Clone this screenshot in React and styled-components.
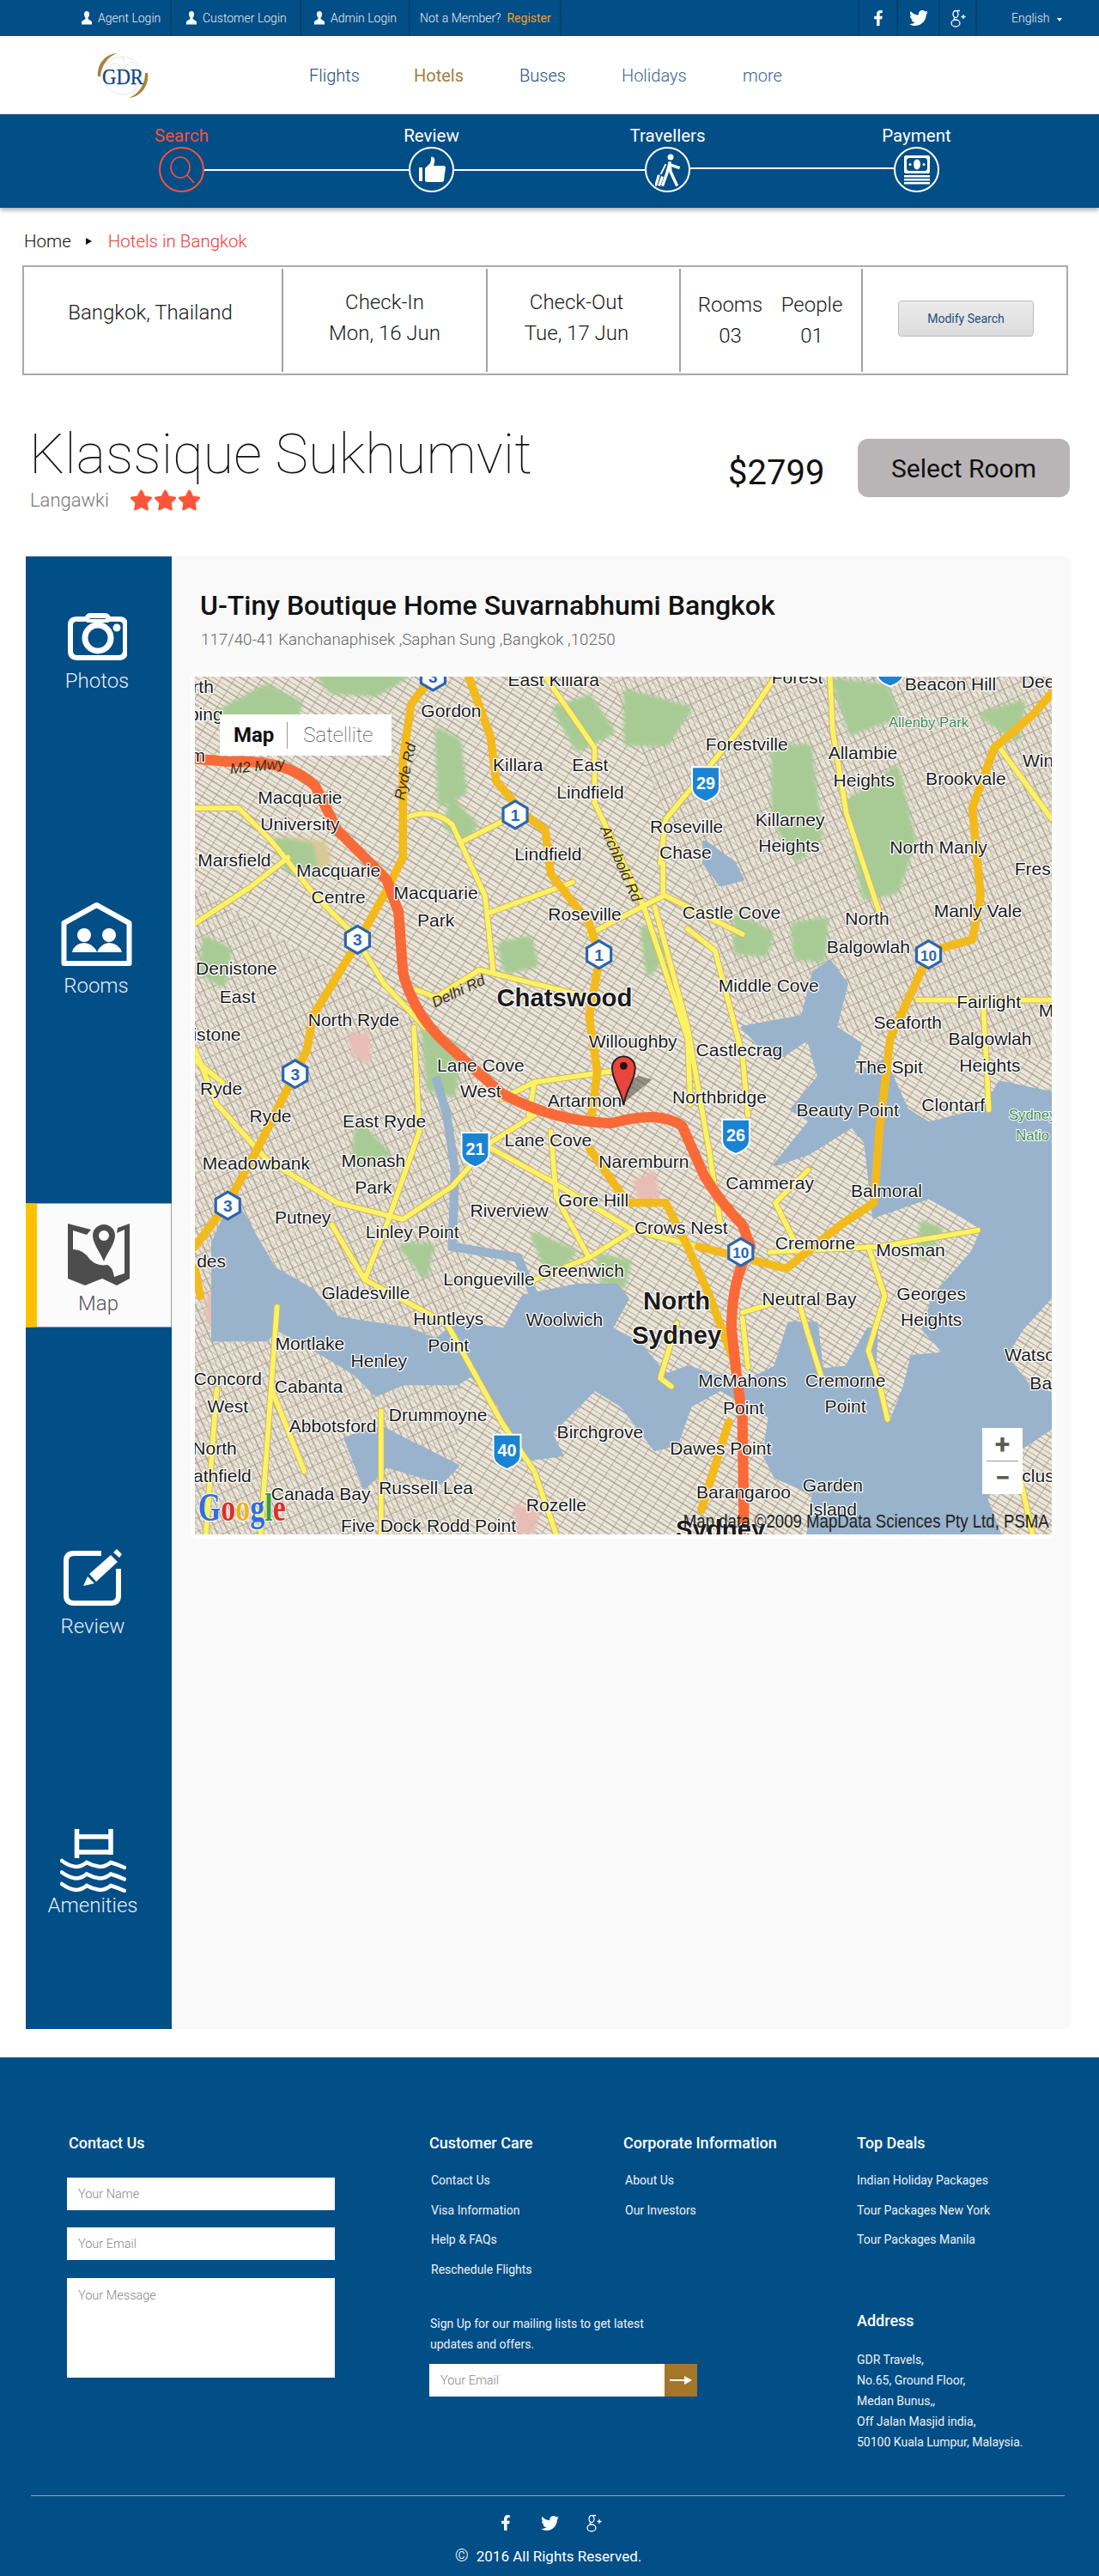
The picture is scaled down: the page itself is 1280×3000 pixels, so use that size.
import React from "react";
import styled, { createGlobalStyle } from "styled-components";
import { FaFacebookF, FaTwitter, FaStar } from "react-icons/fa";

const NAVY = "#024e87";

const GlobalStyle = createGlobalStyle`
  * { box-sizing: border-box; }
  body {
    margin: 0;
    background: #fff;
    font-family: Roboto, "Liberation Sans", sans-serif;
    font-weight: 300;
    color: #111;
  }
`;

/* ---------- map data, all in a 1565 x 1565 drawing space ---------- */
const water = [
  "1160,520 1190,560 1170,640 1215,670 1200,730 1260,700 1300,790 1340,815 1440,790 1470,740 1565,760 1565,1130 1510,1190 1480,1240 1520,1290 1565,1310 1565,1370 1490,1420 1445,1500 1470,1565 1120,1565 1130,1490 1060,1460 1040,1420 1050,1350 960,1300 905,1330 880,1400 840,1410 780,1330 730,1300 650,1380 670,1420 590,1430 555,1330 500,1270 560,1200 600,1130 700,1110 770,1110 790,1135 760,1190 810,1215 860,1275 900,1260 1000,1290 1060,1260 1085,1180 1135,1180 1145,1265 1190,1260 1230,1190 1245,1190 1240,1290 1270,1362 1295,1300 1310,1240 1370,1235 1330,1190 1350,1130 1420,1050 1440,1005 1340,950 1240,985 1225,850 1200,820 1120,870 1060,890 1125,810 1090,790 1140,730 1120,660 1060,700 1000,640 1110,620 1130,540",
  "30,1040 70,950 110,1020 145,1080 215,1120 260,1170 390,1190 440,1210 480,1180 560,1190 510,1270 480,1290 380,1290 330,1310 290,1270 240,1240 150,1190 130,1210 30,1210",
  "275,1390 340,1370 400,1400 480,1440 450,1470 350,1440 310,1480",
  "930,300 985,340 1000,370 960,380 930,340",
];
const parks = [
  "40,70 130,20 190,50 170,110 90,130",
  "230,0 380,0 330,30 250,25",
  "445,100 480,120 490,210 450,230",
  "470,230 510,270 490,300 460,270",
  "660,60 720,40 760,100 700,130",
  "790,30 900,60 860,120 790,120",
  "1060,130 1120,130 1140,290 1100,330 1060,260",
  "1195,230 1280,170 1310,300 1280,390 1225,400",
  "1170,10 1260,20 1280,70 1200,100",
  "1440,70 1510,50 1500,110",
  "990,440 1050,470 1040,505 990,500",
  "1095,455 1150,445 1145,515 1100,510",
  "820,460 860,500 830,540",
  "560,490 610,480 620,525 570,535",
  "1460,790 1565,760 1565,860 1500,860",
  "420,650 480,680 470,760 430,750",
  "150,300 210,310 220,360 170,350",
  "20,480 60,500 50,560 15,540",
  "740,1060 790,1070 780,1110 745,1100",
  "620,1020 690,1050 650,1090",
  "1420,1240 1470,1230 1450,1330 1400,1330",
  "1330,1000 1360,1010 1330,1060",
  "300,820 350,870 290,890",
  "380,1040 430,1040 420,1090",
];
const tan = ["160,290 240,300 250,340 200,370 170,330"];
const pink = [
  "20,1130 70,1100 90,1140 50,1190 20,1180",
  "280,650 320,650 320,710 285,690",
  "800,920 840,900 850,950 810,960",
  "580,1510 630,1520 620,1565 590,1565",
];
const yellowRoads = [
  "M0 240 L80 240 L140 300 L220 400 L290 470 L345 560 L420 640",
  "M0 450 L100 385 L170 330",
  "M400 570 L440 585 L520 535 L620 560 L720 585",
  "M380 260 Q430 235 470 270 L530 400 L545 540",
  "M540 430 L690 375",
  "M490 300 L570 260",
  "M730 230 L820 420 L900 660 L905 780",
  "M855 340 L855 400 L720 470",
  "M860 400 L1000 470",
  "M640 0 L730 130 L730 230",
  "M1160 0 L1165 100 L1190 250 L1250 430",
  "M840 420 L900 640 L940 870 L960 1000",
  "M900 460 L950 500 L1000 690 L1010 800",
  "M1060 0 L1000 90 L860 260 L850 340",
  "M0 680 L40 780 L130 880 L260 960 L380 990 L470 930 L540 850 L620 800",
  "M400 640 L410 830 L350 1000 L310 1100 L460 1180 L560 1360 L620 1450 L660 1565",
  "M540 860 L650 920 L800 1010",
  "M620 740 L610 800",
  "M650 830 L660 950 L720 1060",
  "M1050 1050 L1250 1040 L1430 1010",
  "M1230 1040 L1260 1130 L1230 1230 L1250 1290 L1265 1355",
  "M1000 1160 L1100 1130 L1120 1200 L1145 1280",
  "M880 1180 L850 1280 L870 1295",
  "M1000 1170 L1010 1260",
  "M1500 1430 L1530 1565",
  "M1320 590 L1565 590",
  "M1440 600 L1450 790",
  "M1470 130 L1565 260",
  "M150 1150 L120 1565",
  "M340 1340 L340 1565",
  "M250 1000 L310 1100",
  "M140 1300 L200 1450",
  "M40 1300 L20 1565",
  "M620 1100 L720 1060 L800 1010 L920 1040",
  "M1120 900 L1060 960 L1100 1040",
  "M0 700 L50 740",
  "M760 720 L620 740 L560 770",
];
const orangeRoads = [
  "M430 5 L395 50 L380 150 L380 330 L350 390 L300 480 L215 620 L205 680 L170 750 L110 870 L60 960 L0 1040",
  "M500 0 L540 110 L550 190 L600 250 L640 280 L650 360 L720 450 L740 510 L720 620 L735 720 L725 800",
  "M720 860 L790 960 L860 960 L900 1040 L940 1130 L985 1250",
  "M920 1040 L1080 1080 L1180 1000 L1240 960 L1250 830 L1270 660 L1330 530 L1345 500 L1420 480 L1435 400 L1420 240 L1460 130 L1530 70 L1565 30",
  "M975 1360 L925 1520",
  "M0 1080 L10 1130",
];
const routePath =
  "M0 150 L60 155 Q170 150 220 200 L260 280 L350 370 L372 430 L380 540 Q400 620 470 680 L560 760 Q650 810 760 815 Q850 790 890 820 L930 910 Q960 960 1000 1000 L1015 1040 Q980 1100 980 1190 L990 1280 L1000 1350 L1003 1565";
const shields = [
  ["3", 297, 480], ["3", 183, 725], ["3", 60, 965], ["3", 435, 0],
  ["1", 585, 252], ["1", 738, 507], ["10", 1340, 507], ["10", 997, 1050],
];
const badges = [
  ["29", 933, 195], ["21", 512, 862], ["26", 988, 838], ["40", 570, 1413], ["", 1270, -15],
];
const places = [
  ["rth", 15, 30], ["ping", 20, 80], ["m", 5, 155], ["Gordon", 468, 73], ["East Killara", 655, 18],
  ["Forest", 1100, 12], ["Beacon Hill", 1380, 25], ["Dee", 1540, 20], ["Forestville", 1008, 135],
  ["Allambie", 1220, 150], ["Heights", 1222, 200], ["Brookvale", 1408, 198], ["Win", 1540, 165],
  ["Killara", 590, 172], ["East", 722, 172], ["Lindfield", 722, 222], ["Macquarie", 192, 232],
  ["University", 192, 280], ["Lindfield", 645, 335], ["Marsfield", 72, 346], ["Macquarie", 262, 365],
  ["Centre", 262, 413], ["Macquarie", 440, 406], ["Park", 440, 456], ["Roseville", 898, 285],
  ["Chase", 896, 332], ["Killarney", 1087, 273], ["Heights", 1085, 320], ["North Manly", 1358, 322],
  ["Fres", 1530, 362], ["Roseville", 712, 445], ["Castle Cove", 980, 442], ["North", 1228, 452],
  ["Balgowlah", 1230, 504], ["Manly Vale", 1430, 438], ["Denistone", 76, 543], ["East", 78, 595],
  ["Middle Cove", 1048, 575], ["Fairlight", 1450, 605], ["M", 1555, 620], ["North Ryde", 290, 638],
  ["Seaforth", 1302, 642], ["istone", 40, 665], ["Willoughby", 800, 677], ["Castlecrag", 994, 693],
  ["Balgowlah", 1452, 672], ["Heights", 1452, 720], ["The Spit", 1268, 723], ["Lane Cove", 522, 720],
  ["West", 522, 768], ["Ryde", 48, 763], ["Artarmon", 712, 785], ["Northbridge", 958, 778],
  ["Beauty Point", 1192, 802], ["Clontarf", 1385, 793], ["Ryde", 138, 813], ["East Ryde", 346, 822],
  ["Lane Cove", 645, 857], ["Naremburn", 820, 896], ["Meadowbank", 112, 900], ["Monash", 326, 895],
  ["Park", 326, 943], ["Cammeray", 1050, 935], ["Balmoral", 1263, 950], ["Gore Hill", 728, 966],
  ["Riverview", 574, 986], ["Putney", 197, 998], ["Linley Point", 397, 1025], ["Crows Nest", 888, 1017],
  ["Cremorne", 1133, 1045], ["Mosman", 1307, 1057], ["des", 30, 1078], ["Greenwich", 705, 1095],
  ["Longueville", 537, 1110], ["Neutral Bay", 1122, 1147], ["Gladesville", 312, 1135], ["Georges", 1345, 1138],
  ["Heights", 1345, 1185], ["Huntleys", 463, 1182], ["Woolwich", 675, 1185], ["Mortlake", 210, 1228],
  ["Point", 463, 1232], ["Henley", 336, 1260], ["Watso", 1525, 1248], ["Concord", 60, 1292],
  ["McMahons", 1000, 1295], ["Cremorne", 1188, 1295], ["Ba", 1545, 1300], ["Cabanta", 208, 1307],
  ["West", 60, 1342], ["Point", 1002, 1345], ["Point", 1188, 1343], ["Drummoyne", 444, 1358],
  ["Abbotsford", 252, 1378], ["Birchgrove", 740, 1390], ["North", 36, 1420], ["Dawes Point", 960, 1420],
  ["clus", 1540, 1470], ["athfield", 50, 1470], ["Garden", 1165, 1487], ["Canada Bay", 230, 1503],
  ["Russell Lea", 422, 1492], ["Barangaroo", 1002, 1500], ["Rozelle", 660, 1522], ["Island", 1165, 1530],
  ["Five Dock", 340, 1560], ["Rodd Point", 505, 1560],
];
const bigPlaces = [
  ["Chatswood", 675, 602], ["North", 880, 1155], ["Sydney", 880, 1218], ["Sydney", 960, 1572],
];
const roadNames = [
  ["M2 Mwy", 115, 172, -6, 27], ["Ryde Rd", 393, 175, -78, 27],
  ["Delhi Rd", 485, 582, -25, 27], ["Archbold Rd", 770, 345, 66, 27],
];

const hexPoints = "0,-25 22,-12 22,12 0,25 -22,12 -22,-12";

const StreetMap = () => (
  <MapSvg viewBox="0 0 1565 1565" preserveAspectRatio="none">
    <defs>
      <pattern id="streetsA" width="21" height="17" patternUnits="userSpaceOnUse" patternTransform="rotate(32)">
        <rect width="21" height="17" fill="#ebe6da" />
        <path d="M0 0H21M0 8.500H21M0 0V17" stroke="#a89c8b" strokeWidth="2.200" />
      </pattern>
      <pattern id="streetsB" width="19" height="23" patternUnits="userSpaceOnUse" patternTransform="rotate(-24)">
        <path d="M0 0H19M0 0V23M9.500 0V23" stroke="#a89c8b" strokeWidth="2" />
      </pattern>
      <filter id="soft" x="0" y="0" width="1" height="1">
        <feGaussianBlur stdDeviation="1.200" />
      </filter>
      <filter id="softer" x="-0.100" y="-0.100" width="1.200" height="1.200">
        <feGaussianBlur stdDeviation="3" />
      </filter>
    </defs>
    <g filter="url(#soft)">
      <rect width="1565" height="1565" fill="url(#streetsA)" />
      <path d="M0 380 L520 700 L470 1565 L0 1565 Z M760 0 L1565 0 L1565 700 L1000 620 Z" fill="#ebe6da" opacity="0.55" />
      <path d="M0 380 L520 700 L470 1565 L0 1565 Z M760 0 L1565 0 L1565 700 L1000 620 Z" fill="url(#streetsB)" />
    </g>
    <g filter="url(#softer)">
      {tan.map((p, i) => <polygon key={i} points={p} fill="#d9c998" />)}
      {pink.map((p, i) => <polygon key={i} points={p} fill="#e7bdb6" />)}
      {parks.map((p, i) => <polygon key={i} points={p} fill="#a8cb95" stroke="#a8cb95" strokeWidth="14" strokeLinejoin="round" />)}
    </g>
    <g filter="url(#soft)">
      {water.map((p, i) => <polygon key={i} points={p} fill="#99b3cc" stroke="#99b3cc" strokeWidth="6" strokeLinejoin="round" />)}
      <path d="M440 730 L460 800 L475 900 L470 1040 L590 1060 L620 1130" fill="none" stroke="#99b3cc" strokeWidth="16" />
    </g>
    <RoadGroup>
      {yellowRoads.map((d, i) => <path key={i} d={d} stroke="#c9b866" strokeWidth="12" />)}
      {yellowRoads.map((d, i) => <path key={i} d={d} stroke="#fdf165" strokeWidth="9" />)}
      {orangeRoads.map((d, i) => <path key={i} d={d} stroke="#f3ba1c" strokeWidth="15" />)}
      <path d={routePath} stroke="#fa6a39" strokeWidth="19" />
    </RoadGroup>
    <g fontFamily="'Liberation Sans', sans-serif">
      {places.map(([t, x, y], i) => <PlaceName key={i} x={x} y={y}>{t}</PlaceName>)}
      {bigPlaces.map(([t, x, y], i) => <PlaceName key={i} x={x} y={y} $big>{t}</PlaceName>)}
      {roadNames.map(([t, x, y, r, s], i) => (
        <RoadName key={i} x={x} y={y} fontSize={s} transform={`rotate(${r} ${x} ${y})`}>{t}</RoadName>
      ))}
      <ParkName x="1340" y="92">Allenby Park</ParkName>
      <ParkName x="1530" y="808">Sydney</ParkName>
      <ParkName x="1530" y="846">Natio</ParkName>
      {shields.map(([n, x, y], i) => (
        <g key={i} transform={`translate(${x} ${y})`}>
          <polygon points={hexPoints} fill="#fff" stroke="#2a66b0" strokeWidth="5" />
          <ShieldNumber y="11" fontSize={n.length > 1 ? 27 : 30} fill="#2a66b0">{n}</ShieldNumber>
        </g>
      ))}
      {badges.map(([n, x, y], i) => (
        <g key={i} transform={`translate(${x} ${y})`}>
          <path d="M-25 -30 H25 V8 Q25 24 0 33 Q-25 24 -25 8 Z" fill="#1b84d2" stroke="#fff" strokeWidth="3" />
          <ShieldNumber y="10" fontSize="31" fill="#fff">{n}</ShieldNumber>
        </g>
      ))}
      <path d="M783 778 L835 735 L810 728 L786 745 Z" fill="#5c5c4c" opacity="0.6" />
      <path d="M783 782 C778 750 762 738 762 714 A21 21 0 0 1 804 714 C804 738 788 750 783 782 Z" fill="#e8463c" stroke="#2a1a1a" strokeWidth="3" />
      <circle cx="783" cy="710" r="7" fill="#2a1010" />
      <text x="6" y="1540" fontFamily="'Liberation Serif', serif" fontSize="72" fontWeight="700" stroke="#fff" strokeWidth="3" paintOrder="stroke" textLength="160" lengthAdjust="spacingAndGlyphs">
        <tspan fill="#2f6fd6">G</tspan><tspan fill="#d8322a">o</tspan><tspan fill="#e8b71c">o</tspan><tspan fill="#2f6fd6">g</tspan><tspan fill="#3c9d3c">l</tspan><tspan fill="#d8322a">e</tspan>
      </text>
      <text x="892" y="1553" fontSize="36" fill="#222" textLength="668" lengthAdjust="spacingAndGlyphs">Map data ©2009 MapData Sciences Pty Ltd, PSMA</text>
    </g>
  </MapSvg>
);

/* ---------- icons ---------- */
const PersonIcon = () => (
  <svg width="12" height="16" viewBox="0 0 12 16" fill="#fff">
    <path d="M6 0c2 0 3 1.500 3 3.500 0 2-1 3.800-1.500 4.300v1.200L12 12v3.500H0V12l4.500-3V7.800C4 7.300 3 5.500 3 3.500 3 1.500 4 0 6 0z" />
  </svg>
);
const GooglePlusIcon = ({ w = 18, h = 21 }) => (
  <svg width={w} height={h} viewBox="0 0 18 21" fill="none" stroke="#fff" strokeWidth="1.300">
    <ellipse cx="6" cy="5.500" rx="3" ry="4" />
    <ellipse cx="6" cy="16" rx="5" ry="4" />
    <path d="M4.500 9.500q-1 1.500 1.500 2.800M8 1.500h3" />
    <path d="M15 6v5M12.500 8.500h5" />
  </svg>
);
const SearchGlyph = () => (
  <svg width="30" height="34" viewBox="0 0 30 34" fill="none" stroke="#f9513a" strokeWidth="1.600">
    <ellipse cx="13" cy="14" rx="11" ry="12" />
    <path d="M21 23l8 9" />
  </svg>
);
const ThumbGlyph = () => (
  <svg width="32" height="32" viewBox="0 0 32 32" fill="#fff">
    <rect x="1" y="13" width="4" height="16" />
    <path d="M8 14l6-6c1-2 1-4 1-7 4-1 5 3 4 6l-1 4h11c2 0 3 1 3 2l-2 15c0 1-1 2-3 2H11c-2 0-3-1-3-2z" />
  </svg>
);
const WalkerGlyph = () => (
  <svg width="30" height="38" viewBox="0 0 30 38" fill="none" stroke="#fff" strokeWidth="3.400" strokeLinecap="square">
    <circle cx="18" cy="4" r="3.500" fill="#fff" stroke="none" />
    <path d="M17 11l-3 11-5 14M17 11l1 10 7 15M18 13l9 3" />
    <path d="M12 13l-5 10" strokeWidth="2" />
    <path d="M4 26L1 36M8 28l-3 8" strokeWidth="3" />
  </svg>
);
const MoneyGlyph = () => (
  <svg width="30" height="34" viewBox="0 0 30 34" fill="#fff">
    <path fillRule="evenodd" d="M2 0h26a2 2 0 0 1 2 2v17a2 2 0 0 1-2 2H2a2 2 0 0 1-2-2V2a2 2 0 0 1 2-2zM5 3L3 5v11l2 2h20l2-2V5l-2-2z" />
    <ellipse cx="15" cy="10.500" rx="4" ry="6" />
    <circle cx="7" cy="10.500" r="1.500" /><circle cx="23" cy="10.500" r="1.500" />
    <rect x="0" y="23" width="30" height="2.500" /><rect x="0" y="27" width="30" height="2.500" /><rect x="0" y="31" width="30" height="2.500" />
  </svg>
);
const CameraIcon = () => (
  <svg width="69" height="55" viewBox="0 0 69 55" fill="none" stroke="#fff">
    <path d="M22 7l1-2q1-2 3-2h17q3 0 4 3l1 1h12q7 0 7 7v30q0 8-8 8H11q-8 0-8-8V14q0-7 7-7z" strokeWidth="6" strokeLinejoin="round" />
    <path d="M22 9h26" strokeWidth="4" />
    <circle cx="35" cy="29" r="15" strokeWidth="7" />
    <circle cx="57" cy="17" r="4.500" fill="#fff" stroke="none" />
  </svg>
);
const HouseIcon = () => (
  <svg width="83" height="74" viewBox="0 0 83 74" fill="#fff">
    <path d="M3.500 24L41.500 3 79.500 24V71H3.500z" fill="none" stroke="#fff" strokeWidth="6" strokeLinejoin="round" />
    <circle cx="27" cy="38" r="8" /><circle cx="56" cy="38" r="8" />
    <path d="M13 58q2-10 14-11 11 1 15 11zM42 58q4-10 14-11 12 1 15 11z" />
  </svg>
);
const MapTabIcon = () => (
  <svg width="72" height="72" viewBox="0 0 72 72" fill="#4d4d4d">
    <path d="M0 0L27 7l-5 6L6 8v22q12 0 20 12 8 8 20 6 6 2 8 14l12-4V7l-9 4 1-6 14-5v64l-15 8-17-8-20 8-20-8z" />
    <path fillRule="evenodd" d="M42 1a13 13 0 0 1 13 13c0 9-9 20-13 30-4-10-13-21-13-30A13 13 0 0 1 42 1zm0 7a6 6 0 1 0 0 12 6 6 0 0 0 0-12z" />
  </svg>
);
const ReviewIcon = () => (
  <svg width="68" height="67" viewBox="0 0 68 67" fill="#fff">
    <path d="M44 6H12Q3 6 3 15v40q0 9 9 9h43q9 0 9-9V24" fill="none" stroke="#fff" strokeWidth="6" />
    <path d="M30 30L55 8l8 8-25 23zM58 5l4-4 6 6-3 4zM28 33l8 8-13 3z" />
  </svg>
);
const PoolIcon = () => (
  <svg width="77" height="75" viewBox="0 0 77 75" fill="none" stroke="#fff">
    <path d="M19.500 1v34M59 1v30M19 10h40M19 28h40" strokeWidth="5.500" />
    {[0, 13.500, 27].map((dy) => (
      <path key={dy} d="M2 38Q10 44 18 45q7 0 13-5 7 4 15 5 7 0 13-5 7 2 16 6" strokeWidth="4.500" strokeLinecap="round" transform={`translate(0 ${dy})`} />
    ))}
  </svg>
);
const GdrLogo = () => (
  <svg width="60" height="54" viewBox="0 0 60 54">
    <g fill="none" stroke="#c4c4c4" strokeWidth="0.700" strokeDasharray="1.500 1">
      <circle cx="30" cy="27" r="22" />
      <path d="M14 16q8-6 12 0t10-2 12 6M12 32q10 2 14 10M30 6q4 10 2 16M40 34q6 4 4 12" />
    </g>
    <path d="M1 28C0 14 9 2 23 1 13 5 5 15 4 28z" fill="#a8813e" />
    <path d="M59 24c2 15-8 28-22 29 10-4 19-14 19-29z" fill="#a8813e" />
    <LogoWord x="6" y="37" textLength="48" lengthAdjust="spacingAndGlyphs">GDR</LogoWord>
  </svg>
);
const ArrowIcon = () => (
  <svg width="26" height="10" viewBox="0 0 26 10" fill="#fff">
    <rect x="0" y="4" width="20" height="2" />
    <path d="M17 0l9 5-9 5z" />
  </svg>
);

const App = () => {
  return (
    <Page>
      <GlobalStyle />
      <TopBar>
        <TopCell $w={105} $pl={0}><PersonIcon /> Agent Login</TopCell>
        <TopCell $w={151} $pl={17}><PersonIcon /> Customer Login</TopCell>
        <TopCell $w={127} $pl={15}><PersonIcon /> Admin Login</TopCell>
        <TopCell $w={176} $pl={11}>Not a Member?<Register>Register</Register></TopCell>
        <TopSpacer />
        <SocialCell $w={45}><FaFacebookF size={18} /></SocialCell>
        <SocialCell $w={49}><FaTwitter size={22} /></SocialCell>
        <SocialCell $w={43}><GooglePlusIcon /></SocialCell>
        <Language>English <Caret /></Language>
      </TopBar>

      <NavBar>
        <LogoBox><GdrLogo /></LogoBox>
        <NavLink $w={122}>Flights</NavLink>
        <NavLink $w={123} $active>Hotels</NavLink>
        <NavLink $w={119}>Buses</NavLink>
        <NavLink $w={141} $soft>Holidays</NavLink>
        <NavLink $w={60} $soft>more</NavLink>
      </NavBar>

      <Steps>
        <Step>
          <StepLabel $on>Search</StepLabel>
          <StepCircle $on><SearchGlyph /></StepCircle>
        </Step>
        <Connector $w={238} $top={52} />
        <Step>
          <StepLabel>Review</StepLabel>
          <StepCircle><ThumbGlyph /></StepCircle>
        </Step>
        <Connector $w={222} $top={52} />
        <Step>
          <StepLabel>Travellers</StepLabel>
          <StepCircle><WalkerGlyph /></StepCircle>
        </Step>
        <Connector $w={237} $top={50} />
        <Step>
          <StepLabel>Payment</StepLabel>
          <StepCircle><MoneyGlyph /></StepCircle>
        </Step>
      </Steps>

      <Breadcrumb>
        <Crumb>Home</Crumb>
        <CrumbArrow />
        <Crumb $current>Hotels in Bangkok</Crumb>
      </Breadcrumb>

      <SearchBox>
        <SearchCell $w={300} $pr={6} $pb={18}>Bangkok, Thailand</SearchCell>
        <CellDivider />
        <SearchCell $w={236}>
          <CellLine>Check-In</CellLine>
          <CellLine>Mon, 16 Jun</CellLine>
        </SearchCell>
        <CellDivider />
        <SearchCell $w={223} $pr={16}>
          <CellLine>Check-Out</CellLine>
          <CellLine>Tue, 17 Jun</CellLine>
        </SearchCell>
        <CellDivider />
        <CountCell>
          <CountColumn><CellLine>Rooms</CellLine><CellLine>03</CellLine></CountColumn>
          <CountColumn><CellLine>People</CellLine><CellLine>01</CellLine></CountColumn>
        </CountCell>
        <CellDivider />
        <ModifyCell><ModifyButton>Modify Search</ModifyButton></ModifyCell>
      </SearchBox>

      <TitleRow>
        <TitleBlock>
          <HotelName>Klassique Sukhumvit</HotelName>
          <SubLine>
            <Location>Langawki</Location>
            <Stars><FaStar /><FaStar /><FaStar /></Stars>
          </SubLine>
        </TitleBlock>
        <Price>$2799</Price>
        <SelectButton>Select Room</SelectButton>
      </TitleRow>

      <Main>
        <Sidebar>
          <SideItem $h={403} $pt={66} $shift={4}>
            <CameraIcon />
            <SideLabel $mt={10}>Photos</SideLabel>
          </SideItem>
          <SideItem $h={350} $shift={6}>
            <HouseIcon />
            <SideLabel $mt={9}>Rooms</SideLabel>
          </SideItem>
          <SideItem $h={145} $pt={23} $active>
            <MapTabIcon />
            <SideLabel $mt={7} $dark>Map</SideLabel>
          </SideItem>
          <SideItem $h={583} $pt={257} $shift={14}>
            <ReviewIcon />
            <SideLabel $mt={10}>Review</SideLabel>
          </SideItem>
          <SideItem $h={234} $shift={14}>
            <PoolIcon />
            <SideLabel $mt={1}>Amenities</SideLabel>
          </SideItem>
        </Sidebar>

        <Panel>
          <PanelHead>
            <PanelTitle>U-Tiny Boutique Home Suvarnabhumi Bangkok</PanelTitle>
            <PanelAddress>117/40-41 Kanchanaphisek ,Saphan Sung ,Bangkok ,10250</PanelAddress>
          </PanelHead>
          <MapFrame>
            <MapCanvas>
              <StreetMap />
              <MapTypes>
                <MapType $on>Map</MapType>
                <MapTypeRule />
                <MapType>Satellite</MapType>
              </MapTypes>
              <ZoomBox>
                <ZoomKey>+</ZoomKey>
                <ZoomRule />
                <ZoomKey>−</ZoomKey>
              </ZoomBox>
            </MapCanvas>
          </MapFrame>
        </Panel>
      </Main>

      <Footer>
        <FooterGrid>
          <ContactColumn>
            <FooterHeading $x={2}>Contact Us</FooterHeading>
            <ContactFields>
              <Field placeholder="Your Name" />
              <Field placeholder="Your Email" />
              <MessageField placeholder="Your Message" />
            </ContactFields>
          </ContactColumn>
          <div>
            <FooterHeading>Customer Care</FooterHeading>
            <LinkList>
              <FooterLink>Contact Us</FooterLink>
              <FooterLink>Visa Information</FooterLink>
              <FooterLink>Help &amp; FAQs</FooterLink>
              <FooterLink>Reschedule Flights</FooterLink>
            </LinkList>
          </div>
          <div>
            <FooterHeading>Corporate Information</FooterHeading>
            <LinkList>
              <FooterLink>About Us</FooterLink>
              <FooterLink>Our Investors</FooterLink>
            </LinkList>
          </div>
          <div>
            <FooterHeading>Top Deals</FooterHeading>
            <LinkList $flush>
              <FooterLink>Indian Holiday Packages</FooterLink>
              <FooterLink>Tour Packages New York</FooterLink>
              <FooterLink>Tour Packages Manila</FooterLink>
            </LinkList>
          </div>
          <SignUp>
            <SignUpText>Sign Up for our mailing lists to get latest<br />updates and offers.</SignUpText>
            <SignUpRow>
              <Field placeholder="Your Email" />
              <SignUpButton><ArrowIcon /></SignUpButton>
            </SignUpRow>
          </SignUp>
          <div>
            <FooterHeading>Address</FooterHeading>
            <AddressLines>
              GDR Travels,<br />No.65, Ground Floor,<br />Medan Bunus,,<br />Off Jalan Masjid india,<br />50100 Kuala Lumpur, Malaysia.
            </AddressLines>
          </div>
        </FooterGrid>
        <FooterBottom>
          <FooterSocial>
            <FaFacebookF size={18} />
            <FaTwitter size={21} />
            <GooglePlusIcon />
          </FooterSocial>
          <Copyright><CopyMark>©</CopyMark>2016 All Rights Reserved.</Copyright>
        </FooterBottom>
      </Footer>
    </Page>
  );
};

const Page = styled.div`
  width: 1280px;
  height: 3000px;
  overflow: hidden;
`;

/* top strip */
const TopBar = styled.div`
  height: 42px;
  padding-left: 95px;
  background: ${NAVY};
  color: #e8eef4;
  display: flex;
  font-size: 14px;
`;
const TopCell = styled.div`
  width: ${(p) => p.$w}px;
  padding-left: ${(p) => p.$pl}px;
  display: flex;
  align-items: center;
  gap: 7px;
  white-space: nowrap;
  border-right: 2px solid #03406f;
`;
const Register = styled.span`
  color: #f0a030;
  font-weight: 400;
`;
const TopSpacer = styled.div`
  width: 347px;
  border-right: 2px solid #03406f;
`;
const SocialCell = styled.div`
  width: ${(p) => p.$w}px;
  display: flex;
  align-items: center;
  justify-content: center;
  color: #fff;
  border-right: 2px solid #03406f;
`;
const Language = styled.div`
  padding-left: 40px;
  display: flex;
  align-items: center;
  gap: 8px;
  font-size: 14px;
`;
const Caret = styled.span`
  margin-top: 3px;
  border-left: 3px solid transparent;
  border-right: 3px solid transparent;
  border-top: 4px solid #fff;
`;

/* main nav */
const NavBar = styled.div`
  height: 91px;
  padding-left: 113px;
  display: flex;
  align-items: center;
  background: #fff;
`;
const LogoBox = styled.div`
  width: 247px;
  display: flex;
  align-items: center;
`;
const LogoWord = styled.text`
  font-family: "Liberation Serif", serif;
  font-size: 26px;
  fill: #0f4783;
  stroke: #0f4783;
  stroke-width: 0.3px;
`;
const NavLink = styled.a`
  width: ${(p) => p.$w}px;
  font-size: 20px;
  font-weight: ${(p) => (p.$active ? 400 : 300)};
  color: ${(p) => (p.$active ? "#a67c3d" : p.$soft ? "#3d6590" : "#1c4e80")};
`;

/* progress steps */
const Steps = styled.div`
  height: 109px;
  padding: 12px 0 0 185px;
  background: ${NAVY};
  box-shadow: 0 3px 5px rgba(0, 0, 0, 0.3);
  display: flex;
  position: relative;
`;
const Step = styled.div`
  width: 53px;
  display: flex;
  flex-direction: column;
  align-items: center;
`;
const StepLabel = styled.div`
  height: 26px;
  line-height: 26px;
  font-size: 20.500px;
  font-weight: 400;
  white-space: nowrap;
  color: ${(p) => (p.$on ? "#f9513a" : "#fff")};
`;
const StepCircle = styled.div`
  width: 53px;
  height: 53px;
  border-radius: 50%;
  border: 2px solid ${(p) => (p.$on ? "#f9513a" : "#fff")};
  display: flex;
  align-items: center;
  justify-content: center;
`;
const Connector = styled.div`
  width: ${(p) => p.$w}px;
  height: 2px;
  margin-top: ${(p) => p.$top}px;
  background: #fff;
`;

/* breadcrumb */
const Breadcrumb = styled.div`
  height: 67px;
  padding: 27px 0 0 28px;
  display: flex;
  align-items: flex-start;
`;
const Crumb = styled.span`
  line-height: 24px;
  font-size: 20.500px;
  color: ${(p) => (p.$current ? "#f4383a" : "#111")};
`;
const CrumbArrow = styled.span`
  margin: 8px 19px 0 17px;
  border-top: 4px solid transparent;
  border-bottom: 4px solid transparent;
  border-left: 7px solid #111;
`;

/* search summary */
const SearchBox = styled.div`
  width: 1218px;
  height: 128px;
  margin-left: 26px;
  padding: 2px 0;
  border: 2px solid #aaa;
  display: flex;
  font-size: 24px;
  color: #1a1a1a;
`;
const SearchCell = styled.div`
  width: ${(p) => p.$w}px;
  padding-right: ${(p) => p.$pr || 0}px;
  padding-bottom: ${(p) => p.$pb || 6}px;
  display: flex;
  flex-direction: column;
  align-items: center;
  justify-content: center;
`;
const CellDivider = styled.div`
  width: 2px;
  background: #a3a3a3;
`;
const CellLine = styled.div`
  line-height: 36px;
`;
const CountCell = styled.div`
  width: 210px;
  padding: 0 10px 0;
  display: flex;
  align-items: center;
`;
const CountColumn = styled.div`
  width: 95px;
  text-align: center;
`;
const ModifyCell = styled.div`
  flex: 1;
  padding: 37px 0 0 41px;
`;
const ModifyButton = styled.button`
  width: 158px;
  height: 42px;
  padding: 0;
  border: 1px solid #bbb;
  border-radius: 4px;
  background: linear-gradient(#ebebeb, #dcdcdc);
  color: #1c4e80;
  font-family: Roboto, sans-serif;
  font-size: 14px;
`;

/* hotel title */
const TitleRow = styled.div`
  height: 211px;
  padding: 58px 34px 0 34px;
  display: flex;
  align-items: flex-start;
`;
const TitleBlock = styled.div`
  width: 814px;
`;
const HotelName = styled.h1`
  margin: 0;
  font-size: 65px;
  line-height: 68px;
  font-weight: 100;
  color: #111;
`;
const SubLine = styled.div`
  height: 32px;
  margin: 3px 0 0 1px;
  display: flex;
  align-items: center;
  gap: 24px;
`;
const Location = styled.span`
  font-size: 22px;
  color: #777;
`;
const Stars = styled.span`
  display: flex;
  gap: 1px;
  font-size: 27px;
  color: #fb553b;
`;
const Price = styled.div`
  width: 151px;
  margin-top: 32px;
  font-size: 40px;
  line-height: 48px;
  font-weight: 400;
  color: #111;
`;
const SelectButton = styled.button`
  width: 247px;
  height: 68px;
  margin-top: 16px;
  border: 0;
  border-radius: 12px;
  background: #b9b5b6;
  color: #111;
  font-family: Roboto, sans-serif;
  font-size: 30px;
  font-weight: 400;
`;

/* sidebar + panel */
const Main = styled.div`
  height: 1715px;
  margin-left: 30px;
  width: 1218px;
  display: flex;
`;
const Sidebar = styled.nav`
  width: 170px;
  background: ${NAVY};
  display: flex;
  flex-direction: column;
`;
const SideItem = styled.div`
  height: ${(p) => p.$h}px;
  padding-top: ${(p) => p.$pt || 0}px;
  padding-right: ${(p) => p.$shift || 0}px;
  display: flex;
  flex-direction: column;
  align-items: center;
  ${(p) =>
    p.$active &&
    `
    background: #fbfbfb;
    border: 1px solid #999;
    border-left: 13px solid #ffc000;
    padding-right: 13px;
  `}
`;
const SideLabel = styled.div`
  margin-top: ${(p) => p.$mt}px;
  font-size: 24px;
  line-height: 28px;
  font-weight: 300;
  color: ${(p) => (p.$dark ? "#555" : "#e6edf3")};
`;
const Panel = styled.section`
  width: 1048px;
  background: #f9f9f9;
  border-radius: 0 8px 8px 0;
`;
const PanelHead = styled.div`
  height: 135px;
  padding: 37px 0 0 33px;
`;
const PanelTitle = styled.h2`
  margin: 0;
  font-size: 32px;
  line-height: 40px;
  font-weight: 500;
  color: #111;
`;
const PanelAddress = styled.p`
  margin: 8px 0 0 1px;
  font-size: 18.750px;
  line-height: 24px;
  color: #666;
`;
const MapFrame = styled.div`
  width: 1008px;
  margin-left: 22px;
  padding: 5px;
  background: #fff;
  border-radius: 7px;
`;
const MapCanvas = styled.div`
  position: relative;
  height: 999px;
  overflow: hidden;
`;
const MapSvg = styled.svg`
  display: block;
  width: 998px;
  height: 999px;
`;
const RoadGroup = styled.g`
  fill: none;
  stroke-linejoin: round;
  stroke-linecap: round;
`;
const PlaceName = styled.text`
  font-size: ${(p) => (p.$big ? 46 : 33)}px;
  font-weight: ${(p) => (p.$big ? 700 : 400)};
  text-anchor: middle;
  fill: #1a1a1a;
  stroke: #fff;
  stroke-width: 4px;
  stroke-linejoin: round;
  paint-order: stroke;
`;
const RoadName = styled.text`
  font-style: italic;
  text-anchor: middle;
  fill: #3a3010;
`;
const ParkName = styled.text`
  font-size: 26px;
  text-anchor: middle;
  fill: #3e8a55;
  stroke: #fff;
  stroke-width: 3px;
  paint-order: stroke;
`;
const ShieldNumber = styled.text`
  font-weight: 700;
  text-anchor: middle;
`;
const MapTypes = styled.div`
  position: absolute;
  left: 29px;
  top: 44px;
  width: 200px;
  height: 48px;
  padding-left: 16px;
  background: #fff;
  display: flex;
  align-items: center;
`;
const MapType = styled.span`
  font-size: 24px;
  font-weight: ${(p) => (p.$on ? 700 : 100)};
  color: ${(p) => (p.$on ? "#111" : "#333")};
`;
const MapTypeRule = styled.span`
  width: 1px;
  height: 31px;
  margin: 0 18px 0 15px;
  background: #999;
`;
const ZoomBox = styled.div`
  position: absolute;
  right: 34px;
  bottom: 47px;
  width: 47px;
  height: 77px;
  background: #fff;
  display: flex;
  flex-direction: column;
  align-items: center;
`;
const ZoomKey = styled.div`
  height: 38px;
  font-size: 32px;
  line-height: 38px;
  font-weight: 700;
  color: #5a5a5a;
`;
const ZoomRule = styled.div`
  width: 37px;
  height: 1px;
  background: #999;
`;

/* footer */
const Footer = styled.footer`
  margin-top: 33px;
  height: 604px;
  background: ${NAVY};
  color: #fff;
`;
const FooterGrid = styled.div`
  height: 510px;
  padding: 88px 0 0 78px;
  display: grid;
  grid-template-columns: 422px 226px 272px 1fr;
  grid-template-rows: 207px 1fr;
  font-size: 14px;
`;
const ContactColumn = styled.div`
  grid-row: 1 / 3;
`;
const FooterHeading = styled.h3`
  margin: 0 0 0 ${(p) => p.$x || 0}px;
  font-size: 18px;
  line-height: 24px;
  font-weight: 500;
`;
const ContactFields = styled.div`
  width: 312px;
  margin-top: 28px;
  display: flex;
  flex-direction: column;
  gap: 20px;
`;
const Field = styled.input`
  width: 100%;
  height: 38px;
  padding: 0 13px;
  border: 0;
  border-radius: 0;
  background: #fff;
  font-family: Roboto, sans-serif;
  font-size: 14.500px;
  font-weight: 300;
  &::placeholder {
    color: #888;
    opacity: 1;
  }
`;
const MessageField = styled.textarea`
  width: 100%;
  height: 116px;
  margin-top: 1px;
  padding: 12px 13px;
  border: 0;
  border-radius: 0;
  resize: none;
  display: block;
  font-family: Roboto, sans-serif;
  font-size: 14.500px;
  font-weight: 300;
  &::placeholder {
    color: #888;
    opacity: 1;
  }
`;
const LinkList = styled.div`
  margin-top: 19px;
  padding-left: ${(p) => (p.$flush ? 0 : 2)}px;
  display: flex;
  flex-direction: column;
  gap: 10.500px;
`;
const FooterLink = styled.a`
  line-height: 24px;
  font-weight: 400;
  color: #eef2f6;
`;
const SignUp = styled.div`
  grid-column: 2 / 4;
  padding-top: 3px;
`;
const SignUpText = styled.p`
  margin: 0 0 11px 1px;
  line-height: 24px;
  font-weight: 400;
  color: #eef2f6;
`;
const SignUpRow = styled.div`
  width: 312px;
  display: flex;
`;
const SignUpButton = styled.button`
  flex: 0 0 38px;
  height: 38px;
  padding: 0;
  border: 0;
  background: #a5752a;
  display: flex;
  align-items: center;
  justify-content: center;
`;
const AddressLines = styled.p`
  margin: 21px 0 0;
  line-height: 24px;
  font-weight: 400;
  color: #eef2f6;
`;
const FooterBottom = styled.div`
  width: 1204px;
  height: 94px;
  margin-left: 36px;
  border-top: 1px solid #a9a59b;
  display: flex;
  flex-direction: column;
  align-items: center;
`;
const FooterSocial = styled.div`
  height: 22px;
  margin-top: 20px;
  margin-left: 4px;
  display: flex;
  align-items: center;
  gap: 32px;
`;
const Copyright = styled.div`
  margin-top: 15px;
  margin-left: 1px;
  font-size: 17px;
  line-height: 24px;
  font-weight: 400;
`;
const CopyMark = styled.span`
  margin-right: 9px;
  font-size: 20px;
  font-weight: 300;
`;

export default App;
